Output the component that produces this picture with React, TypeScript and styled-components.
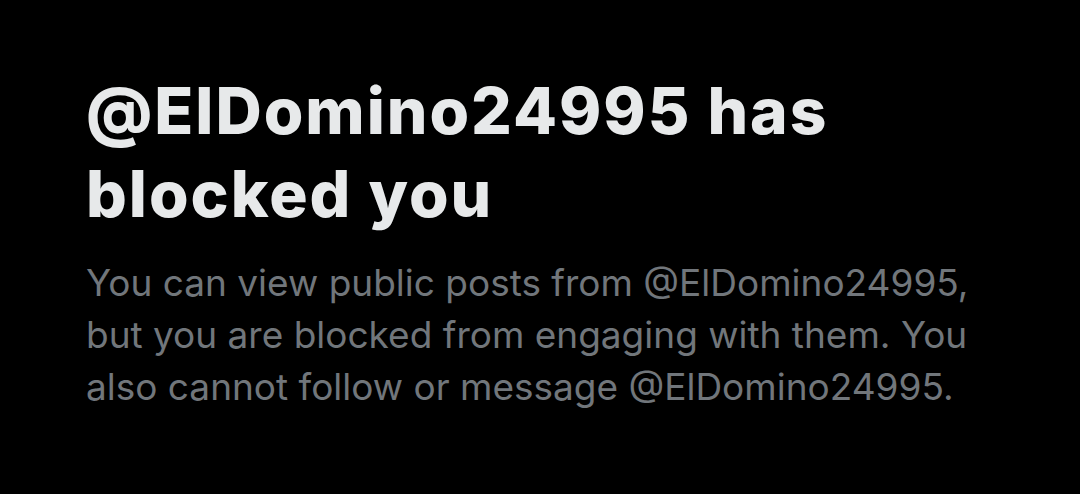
import React from "react";
import styled, { createGlobalStyle } from "styled-components";

const GlobalStyle = createGlobalStyle`
  html, body {
    margin: 0;
    padding: 0;
    background: #000000;
  }
  body {
    font-family: Inter, "Noto Sans", sans-serif;
  }
`;

const Page = styled.div`
  width: 1080px;
  height: 494px;
  background: #000000;
  box-sizing: border-box;
  padding: 69px 0 0 86px;
  display: flex;
  flex-direction: column;
  gap: 22px;
`;

const Title = styled.h1`
  margin: 0;
  width: 900px;
  font-family: Inter, "Noto Sans", sans-serif;
  font-weight: 800;
  font-size: 64px;
  line-height: 83px;
  letter-spacing: 2px;
  color: #e7e9ea;
`;

const Body = styled.p`
  margin: 0;
  width: 960px;
  font-family: Inter, "Noto Sans", sans-serif;
  font-weight: 400;
  font-size: 37px;
  line-height: 52px;
  color: #71767b;
`;

export default function App() {
  return (
    <>
      <GlobalStyle />
      <Page>
        <Title>
          @ElDomino24995 has
          <br />
          blocked you
        </Title>
        <Body>
          You can view public posts from @ElDomino24995,
          <br />
          but you are blocked from engaging with them. You
          <br />
          also cannot follow or message @ElDomino24995.
        </Body>
      </Page>
    </>
  );
}
